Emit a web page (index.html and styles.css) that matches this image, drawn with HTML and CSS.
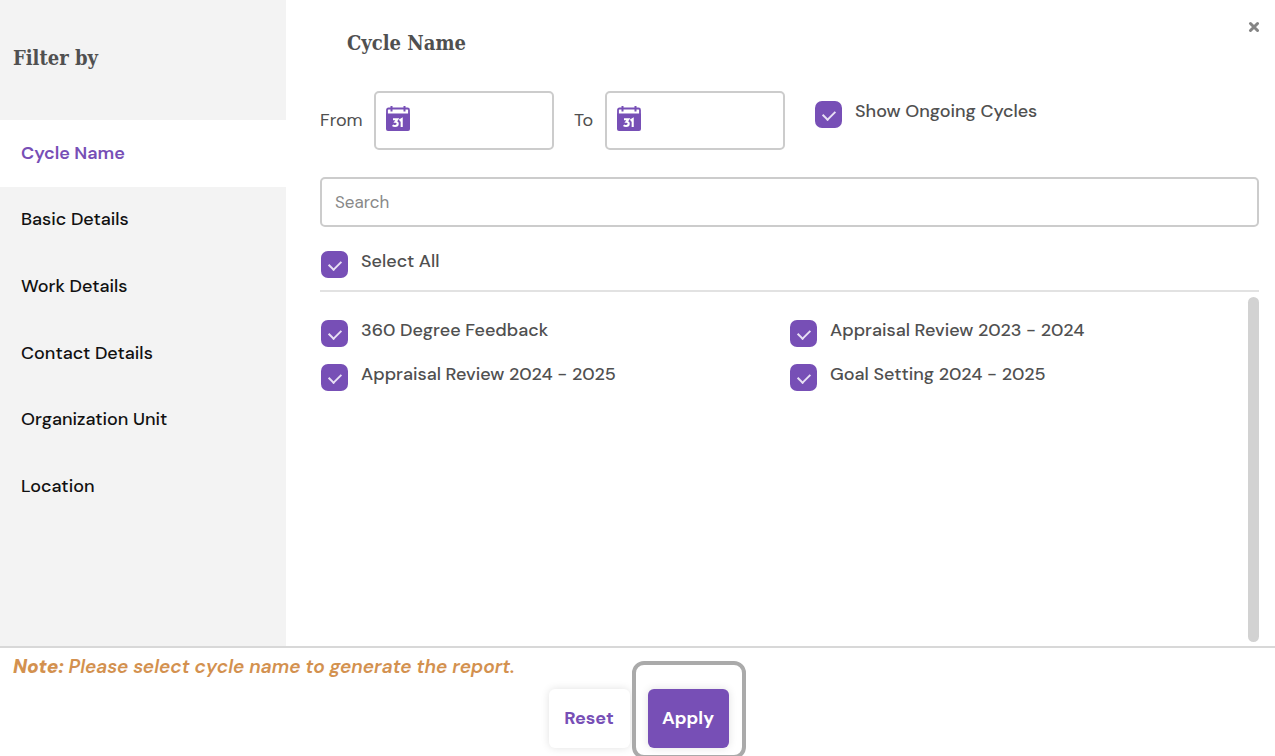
FILE: index.html
```html
<!DOCTYPE html>
<html lang="en">
<head>
  <meta charset="UTF-8" />
  <meta name="viewport" content="width=device-width, initial-scale=1" />
  <title>Filter by</title>
  <link rel="stylesheet" href="styles.css">
</head>
<body>
  <form class="dialog">
    <div class="dialog-body">
      <aside class="sidebar">
        <h2 class="sidebar-title">Filter by</h2>
        <nav class="tabs">
          <a href="#cycle" class="tab active">Cycle Name</a>
          <a href="#basic" class="tab">Basic Details</a>
          <a href="#work" class="tab">Work Details</a>
          <a href="#contact" class="tab">Contact Details</a>
          <a href="#unit" class="tab">Organization Unit</a>
          <a href="#location" class="tab">Location</a>
        </nav>
      </aside>

      <main class="panel" id="cycle">
        <header class="panel-header">
          <h3>Cycle Name</h3>
          <button type="button" class="close" aria-label="Close">
            <svg width="12" height="12" viewBox="0 0 12 12"><path d="M3.500 2.500l7 7M10.500 2.500l-7 7" stroke="#858585" stroke-width="3" stroke-linecap="round"/></svg>
          </button>
        </header>

        <div class="dates">
          <label for="from">From</label>
          <div class="date-box">
            <svg class="calendar" viewBox="0 0 24 25" aria-hidden="true">
              <path d="M1 10V4q0-1.500 1.500-1.500h19Q23 2.500 23 4v6" fill="#fff" stroke="#774fb6" stroke-width="1.800"/>
              <path d="M5.500 0v5.500M18.500 0v5.500" stroke="#774fb6" stroke-width="2"/>
              <path d="M0 7.500h24V23q0 2-2 2H2q-2 0-2-2z" fill="#774fb6"/>
              <path d="M7 13.300h4.300L9.400 15.800q2.300.2 2.300 2 0 2.200-2.600 2.200-1.500 0-2.500-.8M13.500 14.500l2.200-1.300v7.700" fill="none" stroke="#fff" stroke-width="2.100"/>
            </svg>
            <input type="text" id="from" name="from">
          </div>
          <label for="to" class="to-label">To</label>
          <div class="date-box">
            <svg class="calendar" viewBox="0 0 24 25" aria-hidden="true">
              <path d="M1 10V4q0-1.500 1.500-1.500h19Q23 2.500 23 4v6" fill="#fff" stroke="#774fb6" stroke-width="1.800"/>
              <path d="M5.500 0v5.500M18.500 0v5.500" stroke="#774fb6" stroke-width="2"/>
              <path d="M0 7.500h24V23q0 2-2 2H2q-2 0-2-2z" fill="#774fb6"/>
              <path d="M7 13.300h4.300L9.400 15.800q2.300.2 2.300 2 0 2.200-2.600 2.200-1.500 0-2.500-.8M13.500 14.500l2.200-1.300v7.700" fill="none" stroke="#fff" stroke-width="2.100"/>
            </svg>
            <input type="text" id="to" name="to">
          </div>
          <label class="check ongoing"><input type="checkbox" name="ongoing" checked><span>Show Ongoing Cycles</span></label>
        </div>

        <input type="search" class="search" placeholder="Search" aria-label="Search">

        <div class="select-all">
          <label class="check"><input type="checkbox" name="all" checked><span>Select All</span></label>
        </div>

        <div class="list">
          <div class="cycles">
            <label class="check"><input type="checkbox" name="cycle" checked><span>360 Degree Feedback</span></label>
            <label class="check"><input type="checkbox" name="cycle" checked><span>Appraisal Review 2023 - 2024</span></label>
            <label class="check"><input type="checkbox" name="cycle" checked><span>Appraisal Review 2024 - 2025</span></label>
            <label class="check"><input type="checkbox" name="cycle" checked><span>Goal Setting 2024 - 2025</span></label>
          </div>
          <div class="scroll-thumb"></div>
        </div>
      </main>
    </div>

    <footer class="dialog-footer">
      <p class="note"><strong>Note:</strong> Please select cycle name to generate the report.</p>
      <div class="actions">
        <button type="reset" class="btn">Reset</button>
        <div class="highlight">
          <button type="submit" class="btn btn-primary">Apply</button>
        </div>
      </div>
    </footer>
  </form>
</body>
</html>
```
FILE: styles.css
```css
* { box-sizing: border-box; }

body {
  margin: 0;
  font-family: "DM Sans", Inter, sans-serif;
  font-size: 18px;
  line-height: 24px;
  color: #505050;
  background: #fff;
}

input, button {
  font: inherit;
}

h2, h3 {
  margin: 0;
  font-family: "Roboto Slab", "DejaVu Serif Condensed", "DejaVu Serif", serif;
  font-size: 20px;
  line-height: 28px;
  font-weight: 600;
  color: #505050;
}

.dialog {
  display: flex;
  flex-direction: column;
  height: 100vh;
  overflow: hidden;
}

.dialog-body {
  flex: 1;
  display: flex;
  min-height: 0;
}

/* sidebar */
.sidebar {
  flex: 0 0 286px;
  background: #f3f3f3;
}

.sidebar-title {
  height: 120px;
  padding: 44px 13px 0;
}

.tabs {
  display: grid;
  grid-auto-rows: 1fr;
  height: 400px;
}

.tab {
  display: flex;
  align-items: center;
  padding: 0 21px 1px;
  color: #111;
  font-weight: 500;
  text-decoration: none;
}

.tab.active {
  background: #fff;
  color: #774fb6;
  font-weight: 600;
}

/* right panel */
.panel {
  flex: 1;
  display: flex;
  flex-direction: column;
  padding: 0 16px 4px 34px;
}

.panel-header {
  display: flex;
  justify-content: space-between;
  align-items: flex-start;
  height: 91px;
  padding: 21px 0 0 27px;
}

.panel-header h3 {
  padding-top: 8px;
}

.close {
  display: flex;
  padding: 0;
  border: 0;
  background: none;
  cursor: pointer;
}

.dates {
  display: flex;
  align-items: center;
}

.dates > label:first-child {
  width: 54px;
  padding-bottom: 2px;
}

.to-label {
  width: 51px;
  padding: 0 0 2px 20px;
}

.date-box {
  display: flex;
  align-items: center;
  width: 180px;
  height: 59px;
  padding: 0 10px 4px;
  border: 2px solid #ccc;
  border-radius: 5px;
}

.calendar {
  flex: none;
  width: 24px;
  height: 25px;
}

.date-box input {
  width: 100%;
  min-width: 0;
  border: 0;
  outline: 0;
}

.search {
  flex: none;
  height: 50px;
  margin-top: 27px;
  padding: 0 13px;
  border: 2px solid #ccc;
  border-radius: 5px;
  font-size: 17px;
  appearance: none;
}

.search::placeholder {
  color: #888;
}

/* checkboxes */
.check {
  display: flex;
  align-items: flex-start;
  gap: 13px;
  font-weight: 500;
}

.check span {
  padding-top: 1px;
}

.check input {
  flex: none;
  width: 27px;
  height: 27px;
  margin: 3px 0 0;
  border-radius: 7px;
  background: #774fb6;
  appearance: none;
}

.check input:checked::before {
  content: "";
  display: block;
  width: 6px;
  height: 10px;
  margin: 7px 10px;
  border: solid #e8e0f4;
  border-width: 0 2px 2px 0;
  transform: rotate(45deg);
}

.ongoing {
  align-self: flex-start;
  margin: 7px 0 0 30px;
}

.select-all {
  padding: 21px 1px 12px;
  border-bottom: 2px solid #e2e2e2;
}

.list {
  flex: 1;
  display: flex;
  padding-top: 5px;
}

.cycles {
  flex: 1;
  display: grid;
  grid-template-columns: 1fr 1fr;
  align-content: start;
  row-gap: 14px;
  margin-right: -12px;
  padding: 20px 0 0 1px;
}

.scroll-thumb {
  width: 11px;
  margin-left: 1px;
  border-radius: 6px;
  background: #d2d2d2;
}

/* footer */
.dialog-footer {
  flex: none;
  height: 110px;
  border-top: 2px solid #d8d8d8;
}

.note {
  margin: 0;
  padding: 7px 13px 10px;
  font-size: 19px;
  font-style: italic;
  font-weight: 600;
  color: #d3914f;
}

.actions {
  display: flex;
  justify-content: center;
  gap: 18px;
  padding-left: 2px;
}

.btn {
  width: 81px;
  height: 59px;
  padding: 0 0 2px;
  border: 0;
  border-radius: 6px;
  background: #fff;
  color: #774fb6;
  font-weight: 700;
  box-shadow: 0 0 8px rgba(0, 0, 0, 0.12);
  cursor: pointer;
}

.btn-primary {
  background: #774fb6;
  color: #fff;
}

.highlight {
  position: relative;
}

.highlight::after {
  content: "";
  position: absolute;
  inset: -28px -17px -11px -16px;
  border: 4px solid #aaa;
  border-radius: 12px;
  pointer-events: none;
}
```
